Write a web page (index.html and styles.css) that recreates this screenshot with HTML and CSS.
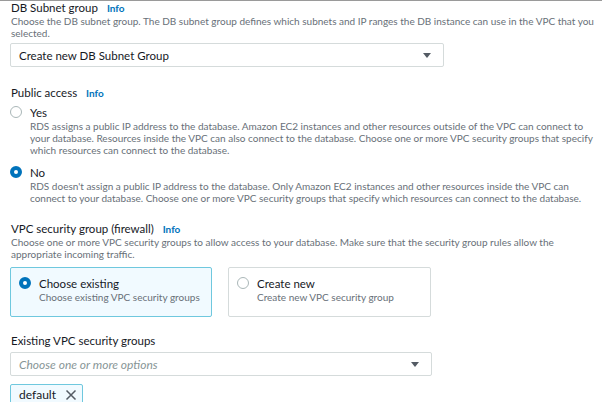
FILE: index.html
```html
<!DOCTYPE html>
<html lang="en">
<head>
<meta charset="utf-8">
<title>DB settings</title>
<link rel="stylesheet" href="styles.css">
</head>
<body>
<div class="page">
  <section class="field">
    <div class="label">DB Subnet group <a class="info">Info</a></div>
    <div class="desc">Choose the DB subnet group. The DB subnet group defines which subnets and IP ranges the DB instance can use in the VPC that you<br>selected.</div>
    <div class="select select-wide">
      <span class="select-text">Create new DB Subnet Group</span>
      <span class="caret"></span>
    </div>
  </section>

  <section class="field field-public">
    <div class="label">Public access <a class="info">Info</a></div>
    <div class="radio-option">
      <div class="radio-row"><span class="radio"></span><span class="radio-label">Yes</span></div>
      <div class="radio-desc">RDS assigns a public IP address to the database. Amazon EC2 instances and other resources outside of the VPC can connect to<br>your database. Resources inside the VPC can also connect to the database. Choose one or more VPC security groups that specify<br>which resources can connect to the database.</div>
    </div>
    <div class="radio-option option-no">
      <div class="radio-row"><span class="radio checked"></span><span class="radio-label">No</span></div>
      <div class="radio-desc">RDS doesn't assign a public IP address to the database. Only Amazon EC2 instances and other resources inside the VPC can<br>connect to your database. Choose one or more VPC security groups that specify which resources can connect to the database.</div>
    </div>
  </section>

  <section class="field field-vpc">
    <div class="label">VPC security group (firewall) <a class="info">Info</a></div>
    <div class="desc">Choose one or more VPC security groups to allow access to your database. Make sure that the security group rules allow the<br>appropriate incoming traffic.</div>
    <div class="tiles">
      <div class="tile tile-selected">
        <div class="radio-row"><span class="radio checked"></span><span class="radio-label">Choose existing</span></div>
        <div class="tile-desc">Choose existing VPC security groups</div>
      </div>
      <div class="tile">
        <div class="radio-row"><span class="radio"></span><span class="radio-label">Create new</span></div>
        <div class="tile-desc">Create new VPC security group</div>
      </div>
    </div>
  </section>

  <section class="field field-existing">
    <div class="label">Existing VPC security groups</div>
    <div class="select select-narrow">
      <span class="select-text placeholder">Choose one or more options</span>
      <span class="caret"></span>
    </div>
    <div class="tokens">
      <span class="token">default
        <svg class="token-x" viewBox="0 0 12 12" width="12" height="12"><path d="M1.5 1.5 L10.5 10.5 M10.5 1.5 L1.5 10.5" stroke="#545b64" stroke-width="1.5" fill="none"/></svg>
      </span>
    </div>
  </section>
</div>
</body>
</html>
```
FILE: styles.css
```css
html, body { margin: 0; padding: 0; background: #fff; }
body {
  border-top: 1px solid #9a9a9a;
  font-family: Lato, "Liberation Sans", sans-serif;
  color: #16191f;
  overflow: hidden;
}
.page { padding-left: 10px; }
.field { display: flex; flex-direction: column; align-items: flex-start; }
.label {
  font-size: 11.5px;
  line-height: 14px;
  padding-left: 1px;
  color: #16191f;
  white-space: nowrap;
}
.info {
  color: #0073bb;
  font-weight: 700;
  font-size: 10px;
  margin-left: 6px;
}
.desc {
  font-size: 10px;
  line-height: 12px;
  color: #687078;
  padding-left: 1px;
  white-space: nowrap;
}
.select {
  margin-top: 4px;
  height: 22px;
  border: 1px solid #d5dbdb;
  border-radius: 2px;
  box-sizing: content-box;
  display: flex;
  align-items: center;
  justify-content: space-between;
  padding: 0 12px 0 8px;
}
.select-wide { width: 412px; }
.select-narrow { width: 400px; }
.select-text { font-size: 11.5px; color: #16191f; }
.placeholder { font-style: italic; font-size: 12px; color: #879596; }
.caret {
  width: 0; height: 0;
  border-left: 4px solid transparent;
  border-right: 4px solid transparent;
  border-top: 5px solid #545b64;
}
.field-public { margin-top: 19px; }
.radio-option { margin-top: 4px; }
.option-no { margin-top: 8px; }
.radio-row { display: flex; align-items: center; height: 16px; }
.radio {
  width: 12px; height: 12px;
  box-sizing: border-box;
  border-radius: 50%;
  border: 1px solid #aab7b8;
  background: #fff;
  margin-right: 8px;
  flex: none;
}
.radio.checked { border: 4px solid #0073bb; }
.radio-label { font-size: 11.5px; color: #16191f; }
.radio-desc {
  padding-left: 20px;
  font-size: 10px;
  line-height: 12px;
  color: #687078;
  white-space: nowrap;
}
.field-vpc { margin-top: 18px; }
.tiles { display: flex; gap: 16px; margin-top: 7px; }
.tile {
  box-sizing: border-box;
  width: 203px;
  height: 50px;
  border: 1px solid #d5dbdb;
  border-radius: 2px;
  padding: 7px 0 0 8px;
}
.tile-selected { width: 202px; border-color: #6fc8de; background: #f1faff; }
.tile-desc { padding-left: 20px; font-size: 10px; line-height: 12px; color: #687078; }
.field-existing { margin-top: 17px; }
.field-existing .select { height: 22px; margin-top: 4px; }
.tokens { margin-top: 7px; }
.token {
  display: inline-flex;
  align-items: center;
  height: 22px;
  box-sizing: border-box;
  border: 1px solid #6fc8de;
  background: #f1faff;
  border-radius: 2px;
  padding: 0 5px 0 8px;
  font-size: 12px;
  color: #16191f;
}
.token-x { margin-left: 9px; }
```
